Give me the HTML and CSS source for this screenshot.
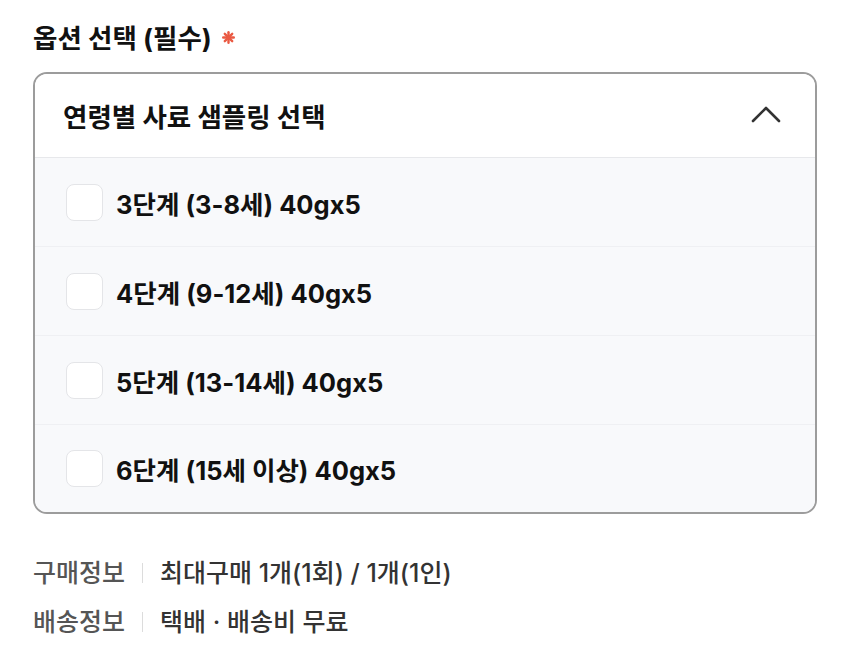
FILE: index.html
```html
<!DOCTYPE html>
<html lang="ko">
<head>
<meta charset="utf-8">
<meta name="viewport" content="width=device-width, initial-scale=1">
<title>옵션 선택</title>
<link rel="stylesheet" href="styles.css">
</head>
<body>
<div class="option-section">
    <h2 class="section-title">
        옵션 선택 (필수)
        <svg class="required" width="13" height="13" viewBox="0 0 13 13">
            <g stroke="#ea5a43" stroke-width="2.4" stroke-linecap="round">
                <line x1="6.5" y1="1.2" x2="6.5" y2="11.8"/>
                <line x1="1.2" y1="6.5" x2="11.8" y2="6.5"/>
                <line x1="2.8" y1="2.8" x2="10.2" y2="10.2"/>
                <line x1="10.2" y1="2.8" x2="2.8" y2="10.2"/>
            </g>
        </svg>
    </h2>

    <div class="option-box">
        <div class="option-header">
            <span class="option-header-text">연령별 사료 샘플링 선택</span>
            <svg class="chevron" width="30" height="18" viewBox="0 0 30 18">
                <polyline points="2,16 15,3 28,16" fill="none" stroke="#333" stroke-width="2.6" stroke-linecap="round" stroke-linejoin="round"/>
            </svg>
        </div>
        <ul class="option-list">
            <li class="option-item"><span class="checkbox"></span><span class="option-label">3단계 (3-8세) 40gx5</span></li>
            <li class="option-item"><span class="checkbox"></span><span class="option-label">4단계 (9-12세) 40gx5</span></li>
            <li class="option-item"><span class="checkbox"></span><span class="option-label">5단계 (13-14세) 40gx5</span></li>
            <li class="option-item"><span class="checkbox"></span><span class="option-label">6단계 (15세 이상) 40gx5</span></li>
        </ul>
    </div>

    <dl class="info-list">
        <div class="info-row">
            <dt>구매정보</dt>
            <dd>최대구매 1개(1회) / 1개(1인)</dd>
        </div>
        <div class="info-row">
            <dt>배송정보</dt>
            <dd>택배 · 배송비 무료</dd>
        </div>
    </dl>
</div>
</body>
</html>
```

FILE: styles.css
```css
/* Reset */
* { margin: 0; padding: 0; box-sizing: border-box; }

body {
    background: #fff;
    font-family: Inter, "Noto Sans CJK KR", "Noto Sans", sans-serif;
    color: #111;
}

.option-section {
    padding: 20px 33px 0;
}

/* Title */
.section-title {
    display: flex;
    align-items: center;
    font-size: 26.5px;
    font-weight: 700;
    line-height: 36px;
    color: #111;
}

.required {
    display: block;
    margin-left: 10px;
    margin-top: -2px;
}

/* Dropdown box */
.option-box {
    margin-top: 16px;
    border: 2px solid #9c9c9c;
    border-radius: 14px;
    overflow: hidden;
}

.option-header {
    height: 84px;
    display: flex;
    align-items: center;
    justify-content: space-between;
    padding: 0 34px 0 28px;
    background: #fff;
    border-bottom: 1px solid #e7e8eb;
}

.option-header-text {
    font-size: 26.5px;
    font-weight: 700;
    color: #111;
}

.chevron {
    display: block;
    margin-top: -3px;
}

.option-list {
    list-style: none;
    background: #f8f9fb;
}

.option-item {
    height: 89px;
    display: flex;
    align-items: center;
    gap: 13px;
    padding-left: 31px;
    border-bottom: 1px solid #eff0f3;
}

.option-item:last-child {
    border-bottom: 0;
    height: 87px;
}

.checkbox {
    width: 37px;
    height: 37px;
    flex-shrink: 0;
    background: #fff;
    border: 1.5px solid #e4e5e8;
    border-radius: 8px;
}

.option-label {
    font-size: 25.5px;
    font-weight: 700;
    color: #111;
}

/* Purchase / delivery info */
.info-list {
    margin-top: 43px;
    display: flex;
    flex-direction: column;
    gap: 17px;
}

.info-row {
    display: flex;
    align-items: center;
    font-size: 25px;
    line-height: 32px;
}

.info-row dt {
    color: #555;
    font-weight: 500;
    padding-right: 17px;
    border-right: 1px solid #dcdcdc;
    line-height: 20px;
}

.info-row dd {
    color: #333;
    font-weight: 500;
    padding-left: 17px;
}
```
